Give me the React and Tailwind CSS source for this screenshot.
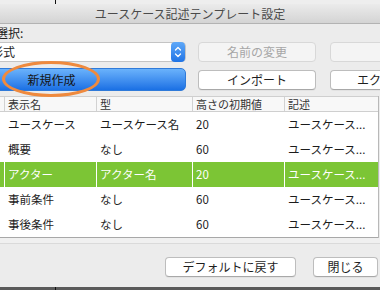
const rows = [
  { name: "ユースケース", type: "ユースケース名", h: "20", desc: "ユースケース..." },
  { name: "概要", type: "なし", h: "60", desc: "ユースケース..." },
  { name: "アクター", type: "アクター名", h: "20", desc: "ユースケース...", selected: true },
  { name: "事前条件", type: "なし", h: "60", desc: "ユースケース..." },
  { name: "事後条件", type: "なし", h: "60", desc: "ユースケース..." },
];

function Button({ children, className = "", disabled }) {
  return (
    <div
      className={`flex h-[20px] shrink-0 items-center justify-center whitespace-nowrap rounded-[4px] border text-[12px] ${
        disabled
          ? "border-[#d8d8d8] bg-[#f4f4f4] text-[#a6a6a6]"
          : "border-[#bdbdbd] border-b-[#a8a8a8] bg-white text-[#1e1e1e] shadow-[0_1px_0_rgba(0,0,0,0.04)]"
      } ${className}`}
    >
      {children}
    </div>
  );
}

export default function App() {
  return (
    <div className="relative flex h-[290px] w-[380px] flex-col overflow-hidden bg-[#ececec] font-['Noto_Sans_CJK_JP','Liberation_Sans',sans-serif]">
      <div className="flex h-[4px] shrink-0 bg-[#eeeeee]">
        <div className="ml-[55px] w-px bg-[#111]" />
      </div>

      <div className="flex h-[20px] shrink-0 items-center justify-center border-b border-[#b3b3b3] bg-gradient-to-b from-[#ebebeb] to-[#d4d4d4] text-[12px] text-[#4a4a4a]">
        ユースケース記述テンプレート設定
      </div>

      <div className="-ml-[4px] flex h-[17px] shrink-0 items-center text-[12px] text-[#222]">選択:</div>

      <div className="mt-[1px] flex h-[20px] shrink-0 items-center">
        <div className="-ml-[18px] flex h-[20px] w-[204px] shrink-0 items-center rounded-[4px] border border-[#c4c4c4] bg-white pl-[8px] text-[12px] text-[#222]">
          <span className="flex-1">形式</span>
          <div className="flex h-[20px] w-[14px] flex-col items-center justify-center rounded-[4px] bg-gradient-to-b from-[#5ea8f8] to-[#1f74e6]">
            <svg width="8" height="14" viewBox="0 0 8 14" fill="none" stroke="white" strokeWidth="1.3" strokeLinecap="round" strokeLinejoin="round">
              <path d="M1.5 5 L4 2.5 L6.5 5" />
              <path d="M1.5 9 L4 11.5 L6.5 9" />
            </svg>
          </div>
        </div>
        <Button disabled className="ml-[12px] w-[118px]">名前の変更</Button>
        <Button disabled className="ml-[14px] w-[118px]" />
      </div>

      <div className="mt-[6px] flex h-[23px] shrink-0 items-center">
        <div className="-ml-[83px] flex h-[23px] w-[269px] shrink-0 items-center justify-center rounded-[5px] border border-[#2f7ad9] bg-gradient-to-b from-[#6ab2fb] to-[#1a70e4] text-[12px] text-[#141414]">
          新規作成
        </div>
        <Button className="ml-[12px] w-[118px]">インポート</Button>
        <Button className="ml-[14px] w-[118px] !justify-start pl-[26px]">エクスポート</Button>
      </div>

      <div className="mt-[5px] flex w-[379px] shrink-0 flex-col border-r border-[#b8b8b8] bg-white text-[#1c1c1c]">
        <div className="flex h-[16px] items-center border-y border-[#cfcfcf] bg-[#f8f8f8] text-[11px] text-[#333]">
          <div className="h-full w-[5px] border-r border-[#d2d2d2]" />
          <div className="h-full w-[92px] border-r border-[#d2d2d2] pl-[3px] leading-[14px]">表示名</div>
          <div className="h-full w-[96px] border-r border-[#d2d2d2] pl-[3px] leading-[14px]">型</div>
          <div className="h-full w-[92px] border-r border-[#d2d2d2] pl-[3px] leading-[14px]">高さの初期値</div>
          <div className="h-full flex-1 pl-[3px] leading-[14px]">記述</div>
        </div>
        {rows.map((r) => (
          <div
            key={r.name}
            className={`flex h-[25px] items-center text-[11.5px] ${r.selected ? "bg-[#7cc535] text-white" : ""}`}
          >
            <div className={`h-full w-[5px] ${r.selected ? "border-r border-white" : ""}`} />
            <div className={`flex h-full w-[92px] items-center pl-[3px] ${r.selected ? "border-r border-white" : ""}`}>{r.name}</div>
            <div className={`flex h-full w-[96px] items-center pl-[3px] ${r.selected ? "border-r border-white" : ""}`}>{r.type}</div>
            <div className={`flex h-full w-[92px] items-center pl-[3px] ${r.selected ? "border-r border-white" : ""}`}>{r.h}</div>
            <div className="flex h-full flex-1 items-center whitespace-nowrap pl-[3px]">{r.desc}</div>
          </div>
        ))}
        <div className="h-px bg-[#a8a8a8]" />
      </div>

      <div className="h-[6px] shrink-0 border-b border-[#dadada] bg-[#f0f0f0]" />

      <div className="flex flex-1 items-start justify-end gap-[17px] pr-[2px] pt-[13px]">
        <Button className="w-[131px]">デフォルトに戻す</Button>
        <Button className="w-[65px]">閉じる</Button>
      </div>

      <div className="flex h-[3px] shrink-0 bg-[#5a5a5a]">
        <div className="ml-[55px] w-px bg-[#111]" />
      </div>

      <div className="pointer-events-none absolute left-[2px] top-[61px] h-[36px] w-[98px] rounded-[50%] border-[3px] border-[#ef8a3e]" />
    </div>
  );
}
